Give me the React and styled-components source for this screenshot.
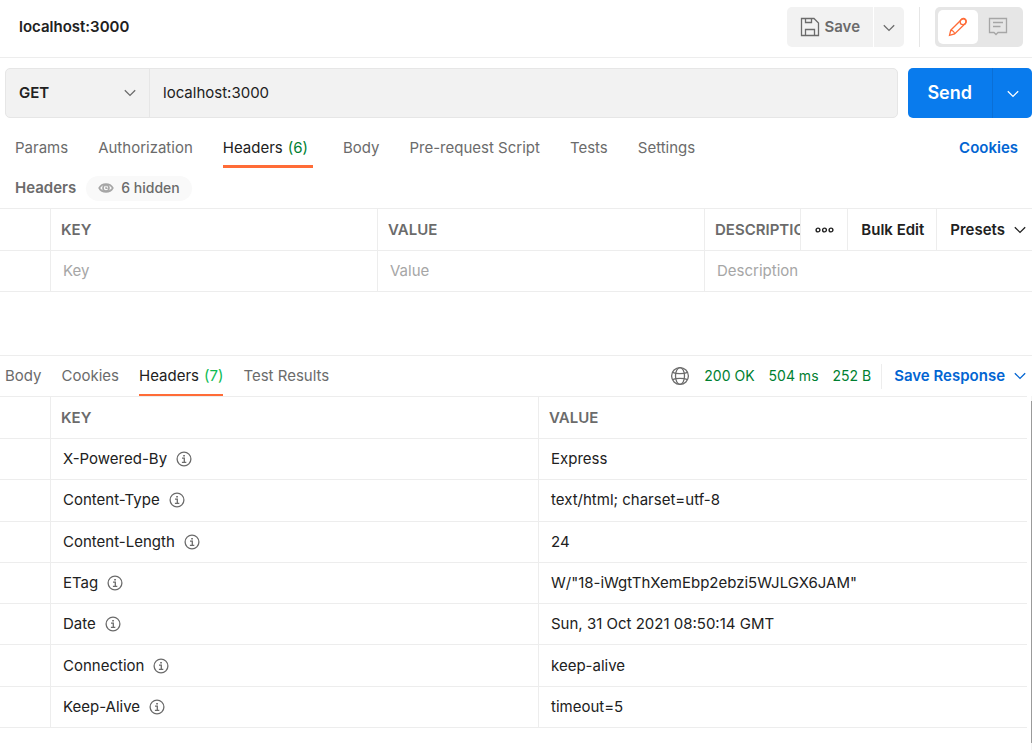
import React from "react";
import styled, { createGlobalStyle } from "styled-components";

const requestTabs = [
  { name: "Params" },
  { name: "Authorization" },
  { name: "Headers", count: 6 },
  { name: "Body" },
  { name: "Pre-request Script" },
  { name: "Tests" },
  { name: "Settings" },
];

const responseTabs = [
  { name: "Body" },
  { name: "Cookies" },
  { name: "Headers", count: 7 },
  { name: "Test Results" },
];

const responseHeaders = [
  { key: "X-Powered-By", value: "Express" },
  { key: "Content-Type", value: "text/html; charset=utf-8" },
  { key: "Content-Length", value: "24" },
  { key: "ETag", value: 'W/"18-iWgtThXemEbp2ebzi5WJLGX6JAM"' },
  { key: "Date", value: "Sun, 31 Oct 2021 08:50:14 GMT" },
  { key: "Connection", value: "keep-alive" },
  { key: "Keep-Alive", value: "timeout=5" },
];

const Chevron = () => (
  <StIcon width="12" height="8" viewBox="0 0 12 8">
    <path d="M.8 1.2 6 6.4 11.2 1.2" />
  </StIcon>
);

const SaveIcon = () => (
  <StIcon width="20" height="20" viewBox="0 0 20 20">
    <path d="M1.500 1.500H14L18.500 6V18.500H1.500Z" />
    <path d="M5.500 1.500V5.500H11.500V1.500M5.500 18.500V12.500H14.500V18.500" />
  </StIcon>
);

const PencilIcon = () => (
  <StIcon width="20" height="20" viewBox="0 0 20 20">
    <path d="M2.700 13.300 13 3C14.200 1.200 16.200 1 17.400 2.300C18.700 3.600 18.600 5.500 17 6.700L6.600 17 1.500 18.300Z" />
    <path d="M2.700 13.300C4.500 13.200 6.600 15 6.600 17" />
    <circle cx="15" cy="4.700" r="2.900" />
  </StIcon>
);

const CommentIcon = () => (
  <StIcon width="20" height="20" viewBox="0 0 20 20">
    <path d="M1.500 1.500H18.500V15.500H10L8 17.500 6 15.500H1.500Z" />
    <path d="M5 5.500H15M5 9.500H12.500" />
  </StIcon>
);

const EyeIcon = () => (
  <StIcon width="16" height="12" viewBox="0 0 16 12">
    <path d="M1.200 6C4 .800 12 .800 14.800 6C12 11.200 4 11.200 1.200 6Z" strokeWidth="1.600" />
    <circle cx="8" cy="6" r="3" strokeWidth="1.600" />
    <path d="M8 4.500V6.300H9.600" />
  </StIcon>
);

const MoreIcon = () => (
  <StIcon width="21" height="6" viewBox="0 0 21 6">
    <circle cx="4" cy="3" r="1.900" strokeWidth="1.400" />
    <circle cx="10.500" cy="3" r="1.900" strokeWidth="1.400" />
    <circle cx="17" cy="3" r="1.900" strokeWidth="1.400" />
  </StIcon>
);

const GlobeIcon = () => (
  <StIcon width="20" height="20" viewBox="0 0 20 20">
    <circle cx="10" cy="10" r="8.400" />
    <ellipse cx="10" cy="10" rx="4.500" ry="8.400" />
    <path d="M2.500 6.300C6 8 14 8 17.500 6.300M2.500 13.700C6 12 14 12 17.500 13.700" />
  </StIcon>
);

const InfoIcon = () => (
  <StIcon width="16" height="16" viewBox="0 0 16 16">
    <circle cx="8" cy="8" r="6.900" />
    <path d="M6 7.200H8.300V11.300M5.900 11.400H10.300" />
    <path d="M7.200 4.700H8.900" strokeWidth="1.600" />
  </StIcon>
);

const Tabs = ({ items, active, compact }) => (
  <StTabs $compact={compact}>
    {items.map((tab) => (
      <StTab key={tab.name} $active={tab.name === active}>
        {tab.name}
        {tab.count && <StCount $bright={compact}>({tab.count})</StCount>}
      </StTab>
    ))}
  </StTabs>
);

const TopBar = () => (
  <StTopBar>
    <StTitle>localhost:3000</StTitle>
    <StSaveGroup>
      <StSaveButton>
        <SaveIcon />
        Save
      </StSaveButton>
      <StSaveMore aria-label="Save options">
        <Chevron />
      </StSaveMore>
    </StSaveGroup>
    <StDivider />
    <StSwitch>
      <StSwitchButton $active aria-label="Edit">
        <PencilIcon />
      </StSwitchButton>
      <StSwitchButton aria-label="Comments">
        <CommentIcon />
      </StSwitchButton>
    </StSwitch>
  </StTopBar>
);

const UrlBar = () => (
  <StUrlBar>
    <StUrlFields>
      <StMethod>
        <StMethodSelect aria-label="Method" defaultValue="GET">
          <option>GET</option>
          <option>POST</option>
          <option>PUT</option>
          <option>DELETE</option>
        </StMethodSelect>
        <Chevron />
      </StMethod>
      <StUrlInput aria-label="Request URL" defaultValue="localhost:3000" />
    </StUrlFields>
    <StSendGroup>
      <StSendButton>Send</StSendButton>
      <StSendMore aria-label="Send options">
        <Chevron />
      </StSendMore>
    </StSendGroup>
  </StUrlBar>
);

const RequestTable = () => (
  <StTable>
    <thead>
      <tr>
        <StHeadCell $handle />
        <StHeadCell>KEY</StHeadCell>
        <StHeadCell>VALUE</StHeadCell>
        <StHeadCell $flush>
          <StHeadTools>
            <StClipped>DESCRIPTION</StClipped>
            <StToolButton aria-label="More columns">
              <MoreIcon />
            </StToolButton>
            <StToolButton>Bulk Edit</StToolButton>
            <StToolButton>
              Presets
              <Chevron />
            </StToolButton>
          </StHeadTools>
        </StHeadCell>
      </tr>
    </thead>
    <tbody>
      <tr>
        <StCell />
        {["Key", "Value", "Description"].map((label) => (
          <StCell key={label}>
            <StCellInput aria-label={label} placeholder={label} />
          </StCell>
        ))}
      </tr>
    </tbody>
  </StTable>
);

const ResponseTable = () => (
  <StResponseBody>
    <StResponseTable>
      <thead>
        <tr>
          <StHeadCell $handle />
          <StHeadCell>KEY</StHeadCell>
          <StHeadCell>VALUE</StHeadCell>
        </tr>
      </thead>
      <tbody>
        {responseHeaders.map((header) => (
          <tr key={header.key}>
            <StCell />
            <StCell>
              <StKey>
                {header.key}
                <InfoIcon />
              </StKey>
            </StCell>
            <StCell>{header.value}</StCell>
          </tr>
        ))}
      </tbody>
    </StResponseTable>
    <StScrollTrack>
      <StScrollThumb />
    </StScrollTrack>
  </StResponseBody>
);

const App = () => {
  return (
    <StPage>
      <GlobalStyle />
      <TopBar />
      <UrlBar />
      <StTabRow>
        <Tabs items={requestTabs} active="Headers" />
        <StCookiesLink href="#cookies">Cookies</StCookiesLink>
      </StTabRow>
      <StSubHeader>
        <StSubTitle>Headers</StSubTitle>
        <StHiddenPill>
          <EyeIcon />6 hidden
        </StHiddenPill>
      </StSubHeader>
      <RequestTable />
      <StResponse>
        <StResponseBar>
          <Tabs items={responseTabs} active="Headers" compact />
          <StStatus>
            <GlobeIcon />
            <StStat>200 OK</StStat>
            <StStat>504 ms</StStat>
            <StStat>252 B</StStat>
          </StStatus>
          <StSaveResponse>
            Save Response
            <Chevron />
          </StSaveResponse>
        </StResponseBar>
        <ResponseTable />
      </StResponse>
    </StPage>
  );
};

export default App;

const GlobalStyle = createGlobalStyle`
  * {
    box-sizing: border-box;
  }

  body {
    margin: 0;
    background-color: #fff;
    color: #212121;
    font: 400 15px/20px Inter, "Liberation Sans", sans-serif;
  }

  button, input, select {
    margin: 0;
    padding: 0;
    border: 0;
    background: none;
    color: inherit;
    font: inherit;
  }

  button {
    cursor: pointer;
  }
`;

const StIcon = styled.svg`
  flex: none;
  fill: none;
  stroke: currentColor;
  stroke-width: 1.3;
`;

const StPage = styled.div`
  display: flex;
  flex-direction: column;
  min-height: 100vh;
`;

const StTopBar = styled.header`
  display: flex;
  align-items: center;
  height: 58px;
  padding: 0 9px 4px 19px;
  border-bottom: 1px solid #ededed;
`;

const StTitle = styled.h1`
  flex: 1;
  margin: 0;
  font-size: 15px;
  font-weight: 600;
  line-height: 22px;
`;

const StSaveGroup = styled.div`
  display: flex;
  gap: 1px;
  height: 40px;
  color: #6b6b6b;
`;

const StSaveButton = styled.button`
  display: flex;
  align-items: center;
  gap: 4px;
  padding: 0 13px;
  border-radius: 5px 0 0 5px;
  background-color: #f2f2f2;
  font-weight: 600;
`;

const StSaveMore = styled.button`
  width: 30px;
  border-radius: 0 5px 5px 0;
  background-color: #f2f2f2;
`;

const StDivider = styled.div`
  width: 1px;
  height: 40px;
  margin: 0 15px;
  background-color: #e6e6e6;
`;

const StSwitch = styled.div`
  display: flex;
  padding: 3px 5px 3px 3px;
  border-radius: 5px;
  background-color: #e6e6e6;
`;

const StSwitchButton = styled.button`
  display: flex;
  align-items: center;
  justify-content: center;
  width: 40px;
  height: 34px;
  border-radius: 5px;
  background-color: ${({ $active }) => ($active ? "#fff" : "transparent")};
  color: ${({ $active }) => ($active ? "#ff6c37" : "#a6a6a6")};
`;

const StUrlBar = styled.div`
  display: flex;
  gap: 10px;
  height: 50px;
  margin: 10px 0 0 5px;
`;

const StUrlFields = styled.div`
  display: flex;
  flex: 1;
  border: 1px solid #e6e6e6;
  border-radius: 5px;
  background-color: #f2f2f2;
`;

const StMethod = styled.div`
  display: grid;
  width: 144px;
  align-items: center;
  border-right: 1px solid #e6e6e6;

  > * {
    grid-area: 1 / 1;
  }

  > svg {
    justify-self: end;
    margin-right: 13px;
    color: #6b6b6b;
    pointer-events: none;
  }
`;

const StMethodSelect = styled.select`
  width: 100%;
  height: 100%;
  padding-left: 13px;
  appearance: none;
  font-weight: 600;
`;

const StUrlInput = styled.input`
  flex: 1;
  min-width: 0;
  padding: 0 13px;
`;

const StSendGroup = styled.div`
  display: flex;
  overflow: hidden;
  border-radius: 5px;
  background-color: #097bed;
  color: #fff;
`;

const StSendButton = styled.button`
  padding: 0 20px 0 19px;
  font-size: 18px;
  font-weight: 600;
`;

const StSendMore = styled.button`
  width: 40px;
  border-left: 1px solid #0a6fd6;
`;

const StTabRow = styled.div`
  display: flex;
  align-items: flex-end;
  justify-content: space-between;
  height: 50px;
  padding: 0 14px 0 15px;
`;

const StTabs = styled.nav`
  display: flex;
  gap: ${({ $compact }) => ($compact ? "20px" : "30px")};
  height: ${({ $compact }) => ($compact ? "41px" : "40px")};
`;

const StTab = styled.button`
  display: flex;
  align-items: center;
  gap: 5px;
  padding-top: 3px;
  border-bottom: 3px solid
    ${({ $active }) => ($active ? "#ff6c37" : "transparent")};
  color: ${({ $active }) => ($active ? "#212121" : "#6b6b6b")};
  white-space: nowrap;
`;

const StCount = styled.span`
  padding-right: ${({ $bright }) => ($bright ? "0" : "5px")};
  color: ${({ $bright }) => ($bright ? "#0cbb52" : "#007f31")};
`;

const StCookiesLink = styled.a`
  color: #0265d2;
  font-weight: 600;
  line-height: 40px;
  text-decoration: none;
`;

const StSubHeader = styled.div`
  display: flex;
  align-items: center;
  gap: 10px;
  height: 40px;
  padding: 0 15px;
  color: #6b6b6b;
`;

const StSubTitle = styled.h2`
  margin: 0;
  font-size: 15px;
  font-weight: 600;
`;

const StHiddenPill = styled.button`
  display: flex;
  align-items: center;
  gap: 7px;
  height: 25px;
  padding: 0 12px;
  border-radius: 13px;
  background-color: #f9f9f9;
  font-size: 14px;
  font-weight: 500;

  > svg {
    color: #a6a6a6;
  }
`;

const StTable = styled.table`
  width: 100%;
  border-top: 1px solid #ededed;
  border-spacing: 0;
  table-layout: fixed;
`;

const StHeadCell = styled.th`
  width: ${({ $handle }) => ($handle ? "51px" : "auto")};
  height: 42px;
  padding: ${({ $flush }) => ($flush ? "0" : "0 10px")};
  border-right: 1px solid #ededed;
  border-bottom: 1px solid #ededed;
  color: #6b6b6b;
  font-weight: 600;
  text-align: left;

  &:last-child {
    border-right: 0;
  }
`;

const StHeadTools = styled.div`
  display: flex;
  align-items: center;
  height: 41px;
`;

const StClipped = styled.span`
  flex: 1;
  min-width: 0;
  margin-left: 10px;
  overflow: hidden;
`;

const StToolButton = styled.button`
  display: flex;
  align-items: center;
  gap: 9px;
  height: 100%;
  padding: 0 12px 0 13px;
  border-left: 1px solid #ededed;
  color: #212121;
  font-weight: 600;
  white-space: nowrap;

  &:last-child {
    padding-right: 6px;
  }
`;

const StCell = styled.td`
  height: 41px;
  padding: 0 12px;
  border-right: 1px solid #ededed;
  border-bottom: 1px solid #ededed;

  &:last-child {
    border-right: 0;
  }
`;

const StCellInput = styled.input`
  display: block;
  width: 100%;

  &::placeholder {
    color: #a6a6a6;
    opacity: 1;
  }
`;

const StResponse = styled.section`
  display: flex;
  flex: 1;
  flex-direction: column;
  margin-top: 63px;
  border-top: 1px solid #ededed;
`;

const StResponseBar = styled.div`
  display: flex;
  align-items: center;
  height: 40px;
  padding: 0 6px 0 5px;
`;

const StStatus = styled.div`
  display: flex;
  align-items: center;
  gap: 14px;
  margin-left: auto;
  padding-right: 10px;
  color: #6b6b6b;
`;

const StStat = styled.span`
  color: #007f31;
  font-size: 14px;
`;

const StSaveResponse = styled.button`
  display: flex;
  align-items: center;
  gap: 9px;
  height: 25px;
  padding-left: 12px;
  border-left: 1px solid #ededed;
  color: #0265d2;
  font-weight: 600;
`;

const StResponseBody = styled.div`
  display: flex;
  flex: 1;
  align-items: flex-start;
  gap: 4px;
`;

const StResponseTable = styled(StTable)`
  flex: 1;
  height: 332px;
`;

const StKey = styled.div`
  display: flex;
  align-items: center;
  gap: 9px;

  > svg {
    color: #6b6b6b;
  }
`;

const StScrollTrack = styled.div`
  display: flex;
  align-self: stretch;
  width: 1px;
  padding: 5px 0 7px;
  background-color: #f5f5f5;
`;

const StScrollThumb = styled.div`
  flex: 1;
  background-color: #9b9b9b;
`;
